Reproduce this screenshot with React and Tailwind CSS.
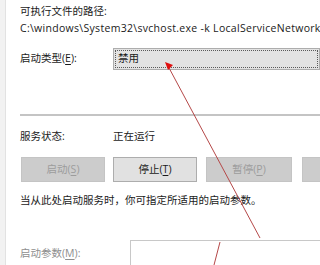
import React from 'react';

const font = { fontFamily: '"Open Sans", "Noto Sans CJK SC", sans-serif' };

function Key({ children }) {
  return <span className="underline underline-offset-2">{children}</span>;
}

function Btn({ children, disabled, className = '' }) {
  return (
    <div
      className={
        'h-[25px] flex items-center justify-center border text-[10.5px] ' +
        (disabled
          ? 'bg-[#cccccc] border-[#c4c4c4] text-[#9c9c9c] '
          : 'bg-[#e1e1e1] border-[#adadad] text-[#1a1a1a] ') +
        className
      }
    >
      {children}
    </div>
  );
}

export default function App() {
  return (
    <div className="relative w-[320px] h-[265px] overflow-hidden bg-white flex" style={font}>
      {/* 左側窗框 */}
      <div className="w-[6px] h-full bg-[#f2f2f2] border-r border-[#e2e2e2] shrink-0" />

      <div className="flex-1 min-w-0 flex flex-col pl-[14px] text-[10.5px] text-[#1a1a1a] whitespace-nowrap">
        <div className="shrink-0 h-[17px] mt-[3px] flex items-center">可执行文件的路径:</div>
        <div className="shrink-0 h-[17px] flex items-center tracking-[0.3px]">C:\windows\System32\svchost.exe -k LocalServiceNetworkRestricted</div>

        <div className="shrink-0 h-[22px] mt-[11px] flex items-center">
          <div className="w-[93px] shrink-0">启动类型(<Key>E</Key>):</div>
          <div className="flex-1 h-full border border-[#adadad] bg-[#e3e3e3] p-[1px]">
            <div className="h-full border border-dotted border-[#5a5a5a] pl-[2px] flex items-center">禁用</div>
          </div>
        </div>

        {/* 分隔線 */}
        <div className="shrink-0 mt-[44px] h-[2px] bg-[#c4c4c4]" />

        <div className="shrink-0 h-[17px] mt-[12px] flex items-center">
          <div className="w-[93px] shrink-0">服务状态:</div>
          <div>正在运行</div>
        </div>

        <div className="shrink-0 mt-[12px] flex">
          <Btn disabled className="w-[84px] ml-[1px] shrink-0">启动(<Key>S</Key>)</Btn>
          <Btn className="w-[84px] ml-[8px] shrink-0">停止(<Key>T</Key>)</Btn>
          <Btn disabled className="w-[86px] ml-[9px] shrink-0">暂停(<Key>P</Key>)</Btn>
          <Btn disabled className="w-[86px] ml-[10px] shrink-0" />
        </div>

        <div className="shrink-0 h-[17px] mt-[10px] flex items-center">当从此处启动服务时，你可指定所适用的启动参数。</div>

        <div className="shrink-0 mt-[31px] flex">
          <div className="w-[110px] shrink-0 h-[25px] text-[#8e8e8e] flex items-center pt-[2px]">启动参数(<Key>M</Key>):</div>
          <div className="flex-1 h-[25px] border-t border-l border-[#c8c8c8] bg-white" />
        </div>
      </div>

      {/* 紅色箭頭標註 */}
      <svg className="absolute inset-0 pointer-events-none" width="320" height="265" viewBox="0 0 320 265">
        <line x1="168" y1="66" x2="260" y2="238" stroke="#b54848" strokeWidth="1" />
        <line x1="220" y1="242" x2="214" y2="265" stroke="#b54848" strokeWidth="1" />
        <polygon points="165,62 173,65 168,70" fill="#e01010" />
      </svg>
    </div>
  );
}
